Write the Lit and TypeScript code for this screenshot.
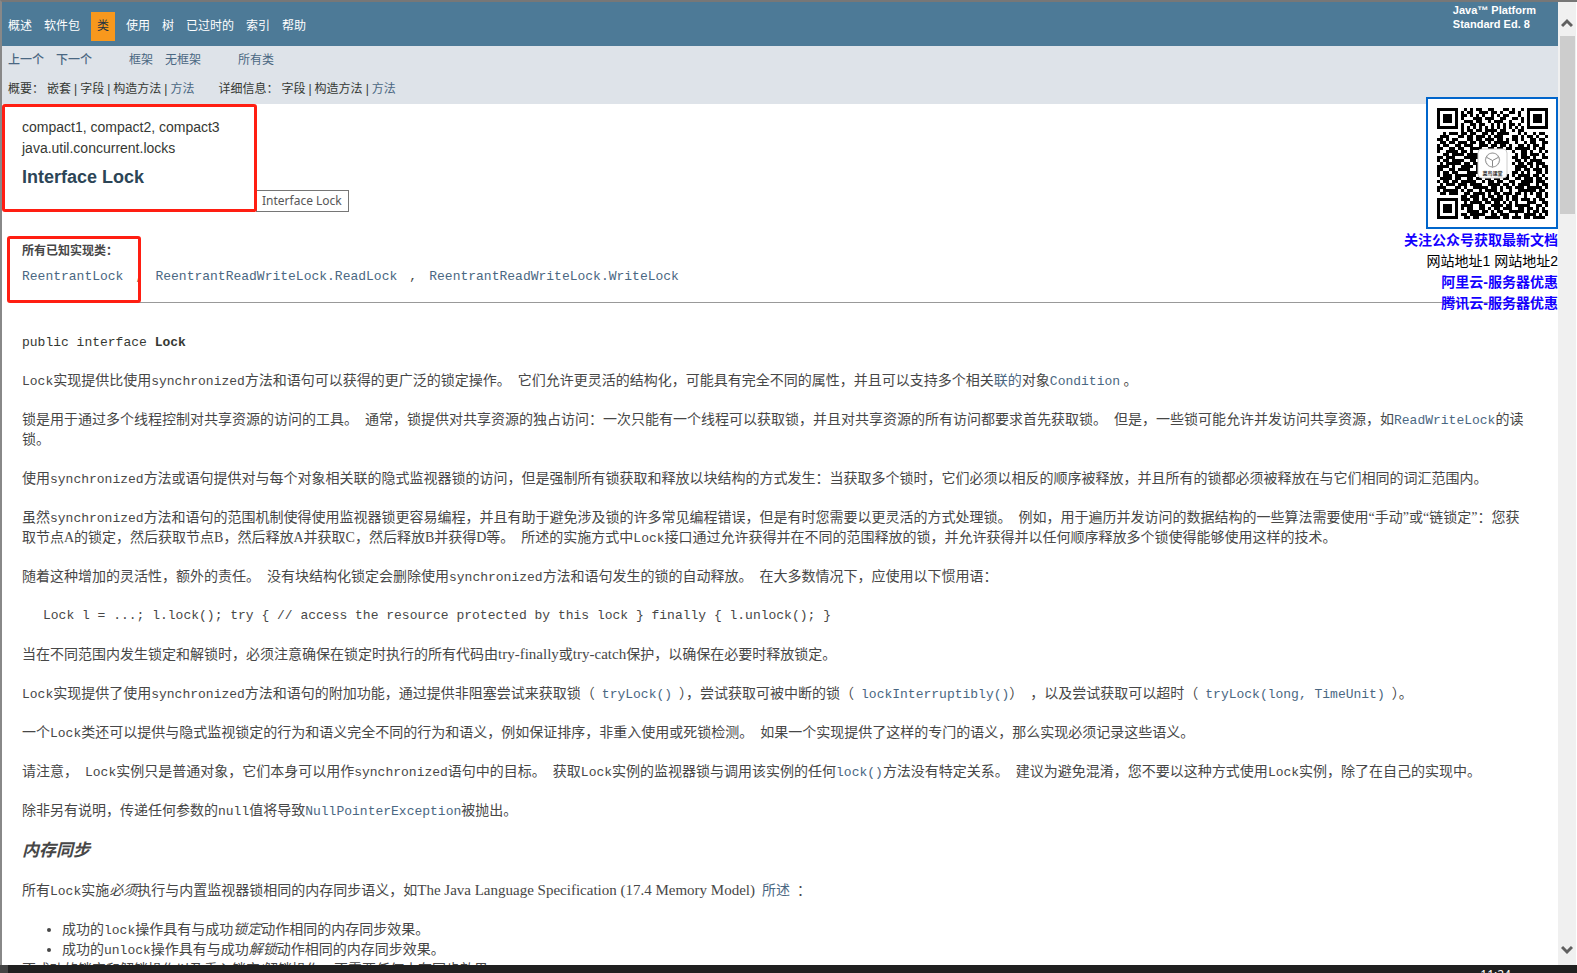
import { LitElement, html, css, svg } from "lit";
import { customElement } from "lit/decorators.js";

const QR_ROWS = [
  "1111111001010110011000110100101111111",
  "1000001010110011101101001101001000001",
  "1011101011010101001010110001001011101",
  "1011101010001110111001100110101011101",
  "1011101001110110010111001000101011101",
  "1000001010011011001010101101001000001",
  "1111111010101010101010101010101111111",
  "0000000010110110111101100101100000000",
  "0010111011011001101011110001010010110",
  "0111000110110111010111000110101101001",
  "1101011000110110111011010110100110110",
  "0110110111011011010111110010010110011",
  "1011001101110011101101101001101011010",
  "1100110110011110011011011011111010110",
  "1001111011010011000000000100110100101",
  "0011011110111100000000000010110111010",
  "1101110001111110000000000110111010011",
  "1011011110011010000000000011010111100",
  "0101111101101100000000000101101101110",
  "1111010011110110000000000011110101011",
  "1100110111100110000000000011011011101",
  "1011011000111110000000000110101001101",
  "1011101111111011001100110101111011010",
  "0111101100110110110110110011011101101",
  "1011011011111001011011001100111101110",
  "0101110111011110011110110101111001011",
  "1110001101001111101101011011101111101",
  "1011111010110010111101001001111110110",
  "0110111001101111010110111011010101101",
  "0000000011011101011011010110010001101",
  "1111111011101101101111010110111010110",
  "1000001001011110110110101010001110011",
  "1011101011110011001111011011111001101",
  "1011101010110011010110111001101101010",
  "1011101000111101101011001111101011011",
  "1000001011011111001101110010011110101",
  "1111111001101100111110110111011011110",
];

@customElement("qr-code")
class QrCode extends LitElement {
  static styles = css`
    :host { display: block; }
    .code { display: block; width: 126px; height: 126px; }
    .brand { font: 700 5px "Noto Sans CJK SC", sans-serif; fill: #333; }
  `;
  render() {
    const cells = QR_ROWS.map((row, y) =>
      [...row].map((c, x) => (c === "1" ? `M${x * 3} ${y * 3}h3v3h-3z` : "")).join("")
    ).join("");
    return html`<svg class="code" viewBox="0 0 126 126" role="img" aria-label="公众号二维码">
      <g transform="translate(8 8)" shape-rendering="crispEdges"><path d=${cells} /></g>
      ${svg`<rect x="49" y="49" width="29" height="29" rx="4" fill="#fff" stroke="#ccc" />
      <circle cx="63.500" cy="60" r="7" fill="none" stroke="#888" />
      <path d="M57 57l6.500 3.500 6.500-3.500M63.500 60.500v7" fill="none" stroke="#888" />
      <path d="M60 53.500h7l4 6.500-4 6.500h-7L56 60z" fill="none" stroke="#bbb" stroke-width=".6" />
      <text class="brand" x="63.500" y="75" text-anchor="middle">菜鸟课堂</text>`}
    </svg>`;
  }
}

@customElement("app-root")
class AppRoot extends LitElement {
  static styles = css`
    :host {
      display: flex;
      flex-direction: column;
      height: 100vh;
      overflow: hidden;
      background: #fff;
      color: #474747;
      font: 14px/20px "Liberation Serif", "Noto Sans CJK SC", serif;
    }
    a { color: #4a6782; text-decoration: none; }
    .window {
      flex: 1;
      min-height: 0;
      display: flex;
      border-top: 2px solid #777;
      border-left: 2px solid #888;
    }
    .page { flex: 1; min-width: 0; overflow: hidden; position: relative; }
    .top, .sub { font: 12px/18px "Liberation Sans", "Noto Sans CJK SC", sans-serif; }
    .top {
      display: flex;
      justify-content: space-between;
      height: 44px;
      background: #4d7a97;
      color: #fff;
    }
    .tabs { display: flex; align-items: center; margin: 4px 0 0; padding: 0 0 0 6px; list-style: none; gap: 12px; }
    .tabs a { color: #fff; }
    .tabs .current { background: #f8981d; color: #253441; padding: 6px; margin: 0 -1px; line-height: 17px; }
    .about { padding: 1px 22px 0 0; font-size: 11px; line-height: 14px; font-weight: 700; white-space: nowrap; }
    .sub { background: #dee3e9; color: #353833; height: 58px; box-sizing: border-box; padding: 5px 6px; display: grid; align-content: start; gap: 11px; }
    .row { display: flex; gap: 37px; }
    .group { display: flex; gap: 12px; }
    .near { font-weight: 500; }
    .detail { display: flex; gap: 24px; }
    .pipes { display: flex; gap: 3px; }
    .header { padding: 13px 20px 0; font: 14px/21px "Liberation Sans", sans-serif; color: #353833; }
    .title { margin: 5px 0 0; font-size: 18px; line-height: 26px; color: #2c4557; }
    .known { margin: 50px 20px 0; padding-bottom: 15px; border-bottom: 1px solid #999; }
    .known dl { margin: 0; }
    .known dt { font: 700 12px/20px "Noto Sans CJK SC", sans-serif; }
    .known dd { margin: 7px 0 0; display: flex; }
    .known .comma { width: 32px; box-sizing: border-box; padding-left: 12px; }
    code, pre, .mono { font: 13px/20px "Liberation Mono", monospace; }
    p code, li code { line-height: 1; }
    .body { padding: 30px 28px 0 20px; }
    .body p, .body pre { margin: 0 0 19px; }
    .body .signature { color: #353833; margin-bottom: 18px; }
    .body .example { padding-left: 21px; }
    .sync { font-size: 17px; line-height: 22px; font-weight: 700; font-style: italic; margin: 0 0 19px; }
    .latin { font-size: 15px; line-height: 1; }
    ul.effects { margin: 0; padding-left: 40px; }
    .promo {
      position: absolute;
      top: 95px;
      right: 0;
      display: flex;
      flex-direction: column;
      align-items: flex-end;
      font: 14px/21px "Liberation Sans", "Noto Sans CJK SC", sans-serif;
      color: #000;
    }
    .promo a { color: #1400ff; font-weight: 700; }
    .promo a.plain { color: #000; font-weight: 400; }
    .frame { border: 2px solid #0065cb; background: #fff; padding: 1px; margin-bottom: 1px; }
    .mark { position: absolute; box-sizing: border-box; border: 3px solid #ff1e12; border-radius: 3px; pointer-events: none; }
    .mark-title { left: 0; top: 102px; width: 255px; height: 108px; }
    .mark-known { left: 5px; top: 234px; width: 134px; height: 67px; }
    .tip {
      position: absolute; left: 254px; top: 188px;
      border: 1px solid #767676; background: #fff; color: #575757;
      padding: 0 6px 0 5px; font: 12px/20px "Noto Sans", sans-serif;
    }
    .scroll {
      width: 18px;
      background: #f0f0f0;
      border-right: 1px solid #fff;
      display: flex;
      flex-direction: column;
      align-items: center;
    }
    .scroll button { border: 0; padding: 0; background: none; width: 17px; height: 34px; display: grid; place-items: center; }
    .scroll svg { display: block; margin-top: 8px; }
    .scroll .down { margin-top: auto; height: 38px; }
    .thumb { width: 15px; height: 178px; background: #cdcdcd; }
    .taskbar {
      height: 8px;
      background: #202020;
      border-left: 8px solid #444;
      overflow: hidden;
      display: flex;
      justify-content: flex-end;
      padding-right: 66px;
      color: #fff;
      font: 12px/12px "Noto Sans", sans-serif;
    }
    .clock { padding-top: 4px; }
  `;

  render() {
    const a = (t: string) => html`<a href="#">${t}</a>`;
    const c = (t: string) => html`<code>${t}</code>`;
    const ca = (t: string) => html`<code><a href="#">${t}</a></code>`;
    return html`
      <div class="window">
        <main class="page">
          <nav class="top">
            <ul class="tabs">
              <li>${a("概述")}</li><li>${a("软件包")}</li><li class="current">类</li>
              <li>${a("使用")}</li><li>${a("树")}</li><li>${a("已过时的")}</li>
              <li>${a("索引")}</li><li>${a("帮助")}</li>
            </ul>
            <div class="about">Java™ Platform<br />Standard Ed. 8</div>
          </nav>
          <nav class="sub">
            <div class="row">
              <div class="group near">${a("上一个")}${a("下一个")}</div>
              <div class="group">${a("框架")}${a("无框架")}</div>
              <div class="group">${a("所有类")}</div>
            </div>
            <div class="detail">
              <div class="pipes"><span>概要：</span><span>嵌套</span><span>|</span><span>字段</span><span>|</span><span>构造方法</span><span>|</span>${a("方法")}</div>
              <div class="pipes"><span>详细信息：</span><span>字段</span><span>|</span><span>构造方法</span><span>|</span>${a("方法")}</div>
            </div>
          </nav>
          <header class="header">
            <div>compact1, compact2, compact3</div>
            <div>java.util.concurrent.locks</div>
            <h2 class="title">Interface Lock</h2>
          </header>
          <section class="known">
            <dl>
              <dt>所有已知实现类：</dt>
              <dd>${ca("ReentrantLock")}<span class="comma mono">,</span>${ca("ReentrantReadWriteLock.ReadLock")}<span class="comma mono">,</span>${ca("ReentrantReadWriteLock.WriteLock")}</dd>
            </dl>
          </section>
          <article class="body">
            <pre class="signature">public interface <b>Lock</b></pre>
            <p>${c("Lock")}实现提供比使用${c("synchronized")}方法和语句可以获得的更广泛的锁定操作。&ensp;它们允许更灵活的结构化，可能具有完全不同的属性，并且可以支持多个相关${a("联的")}对象${ca("Condition")} 。</p>
            <p>锁是用于通过多个线程控制对共享资源的访问的工具。&ensp;通常，锁提供对共享资源的独占访问：一次只能有一个线程可以获取锁，并且对共享资源的所有访问都要求首先获取锁。&ensp;但是，一些锁可能允许并发访问共享资源，如${ca("ReadWriteLock")}的读锁。</p>
            <p>使用${c("synchronized")}方法或语句提供对与每个对象相关联的隐式监视器锁的访问，但是强制所有锁获取和释放以块结构的方式发生：当获取多个锁时，它们必须以相反的顺序被释放，并且所有的锁都必须被释放在与它们相同的词汇范围内。</p>
            <p>虽然${c("synchronized")}方法和语句的范围机制使得使用监视器锁更容易编程，并且有助于避免涉及锁的许多常见编程错误，但是有时您需要以更灵活的方式处理锁。&ensp;例如，用于遍历并发访问的数据结构的一些算法需要使用“手动”或“链锁定”：您获取节点A的锁定，然后获取节点B，然后释放A并获取C，然后释放B并获得D等。&ensp;所述的实施方式中${c("Lock")}接口通过允许获得并在不同的范围释放的锁，并允许获得并以任何顺序释放多个锁使得能够使用这样的技术。</p>
            <p>随着这种增加的灵活性，额外的责任。&ensp;没有块结构化锁定会删除使用${c("synchronized")}方法和语句发生的锁的自动释放。&ensp;在大多数情况下，应使用以下惯用语：</p>
            <pre class="example">Lock l = ...; l.lock(); try { // access the resource protected by this lock } finally { l.unlock(); }</pre>
            <p>当在不同范围内发生锁定和解锁时，必须注意确保在锁定时执行的所有代码由<span class="latin">try-finally</span>或<span class="latin">try-catch</span>保护，以确保在必要时释放锁定。</p>
            <p>${c("Lock")}实现提供了使用${c("synchronized")}方法和语句的附加功能，通过提供非阻塞尝试来获取锁（&ensp;${ca("tryLock()")}&ensp;），尝试获取可被中断的锁（&ensp;${ca("lockInterruptibly()")}）&ensp;，以及尝试获取可以超时（&ensp;${ca("tryLock(long, TimeUnit)")}&ensp;）。</p>
            <p>一个${c("Lock")}类还可以提供与隐式监视锁定的行为和语义完全不同的行为和语义，例如保证排序，非重入使用或死锁检测。&ensp;如果一个实现提供了这样的专门的语义，那么实现必须记录这些语义。</p>
            <p>请注意，&ensp;${c("Lock")}实例只是普通对象，它们本身可以用作${c("synchronized")}语句中的目标。&ensp;获取${c("Lock")}实例的监视器锁与调用该实例的任何${ca("lock()")}方法没有特定关系。&ensp;建议为避免混淆，您不要以这种方式使用${c("Lock")}实例，除了在自己的实现中。</p>
            <p>除非另有说明，传递任何参数的${c("null")}值将导致${ca("NullPointerException")}被抛出。</p>
            <h4 class="sync">内存同步</h4>
            <p>所有${c("Lock")}实施<em>必须</em>执行与内置监视器锁相同的内存同步语义，如<span class="latin">The Java Language Specification (17.4 Memory Model)</span>&ensp;${a("所述")}&ensp;：</p>
            <ul class="effects">
              <li>成功的${c("lock")}操作具有与成功<em>锁定</em>动作相同的内存同步效果。</li>
              <li>成功的${c("unlock")}操作具有与成功<em>解锁</em>动作相同的内存同步效果。</li>
            </ul>
            <div>不成功的锁定和解锁操作以及重入锁定/解锁操作，不需要任何内存同步效果。</div>
          </article>
          <aside class="promo">
            <div class="frame"><qr-code></qr-code></div>
            <a href="#">关注公众号获取最新文档</a>
            <div><a class="plain" href="#">网站地址1</a> <a class="plain" href="#">网站地址2</a></div>
            <a href="#">阿里云-服务器优惠</a>
            <a href="#">腾讯云-服务器优惠</a>
          </aside>
          <div class="tip" role="tooltip">Interface Lock</div>
          <div class="mark mark-title"></div>
          <div class="mark mark-known"></div>
        </main>
        <div class="scroll">
          <button aria-label="向上滚动"><svg width="12" height="10" viewBox="0 0 12 10"><path d="M1 8l5-5 5 5" fill="none" stroke="#606060" stroke-width="3" /></svg></button>
          <div class="thumb"></div>
          <button class="down" aria-label="向下滚动"><svg width="12" height="10" viewBox="0 0 12 10"><path d="M1 2l5 5 5-5" fill="none" stroke="#606060" stroke-width="3" /></svg></button>
        </div>
      </div>
      <footer class="taskbar"><span class="clock">11:24</span></footer>
    `;
  }
}
